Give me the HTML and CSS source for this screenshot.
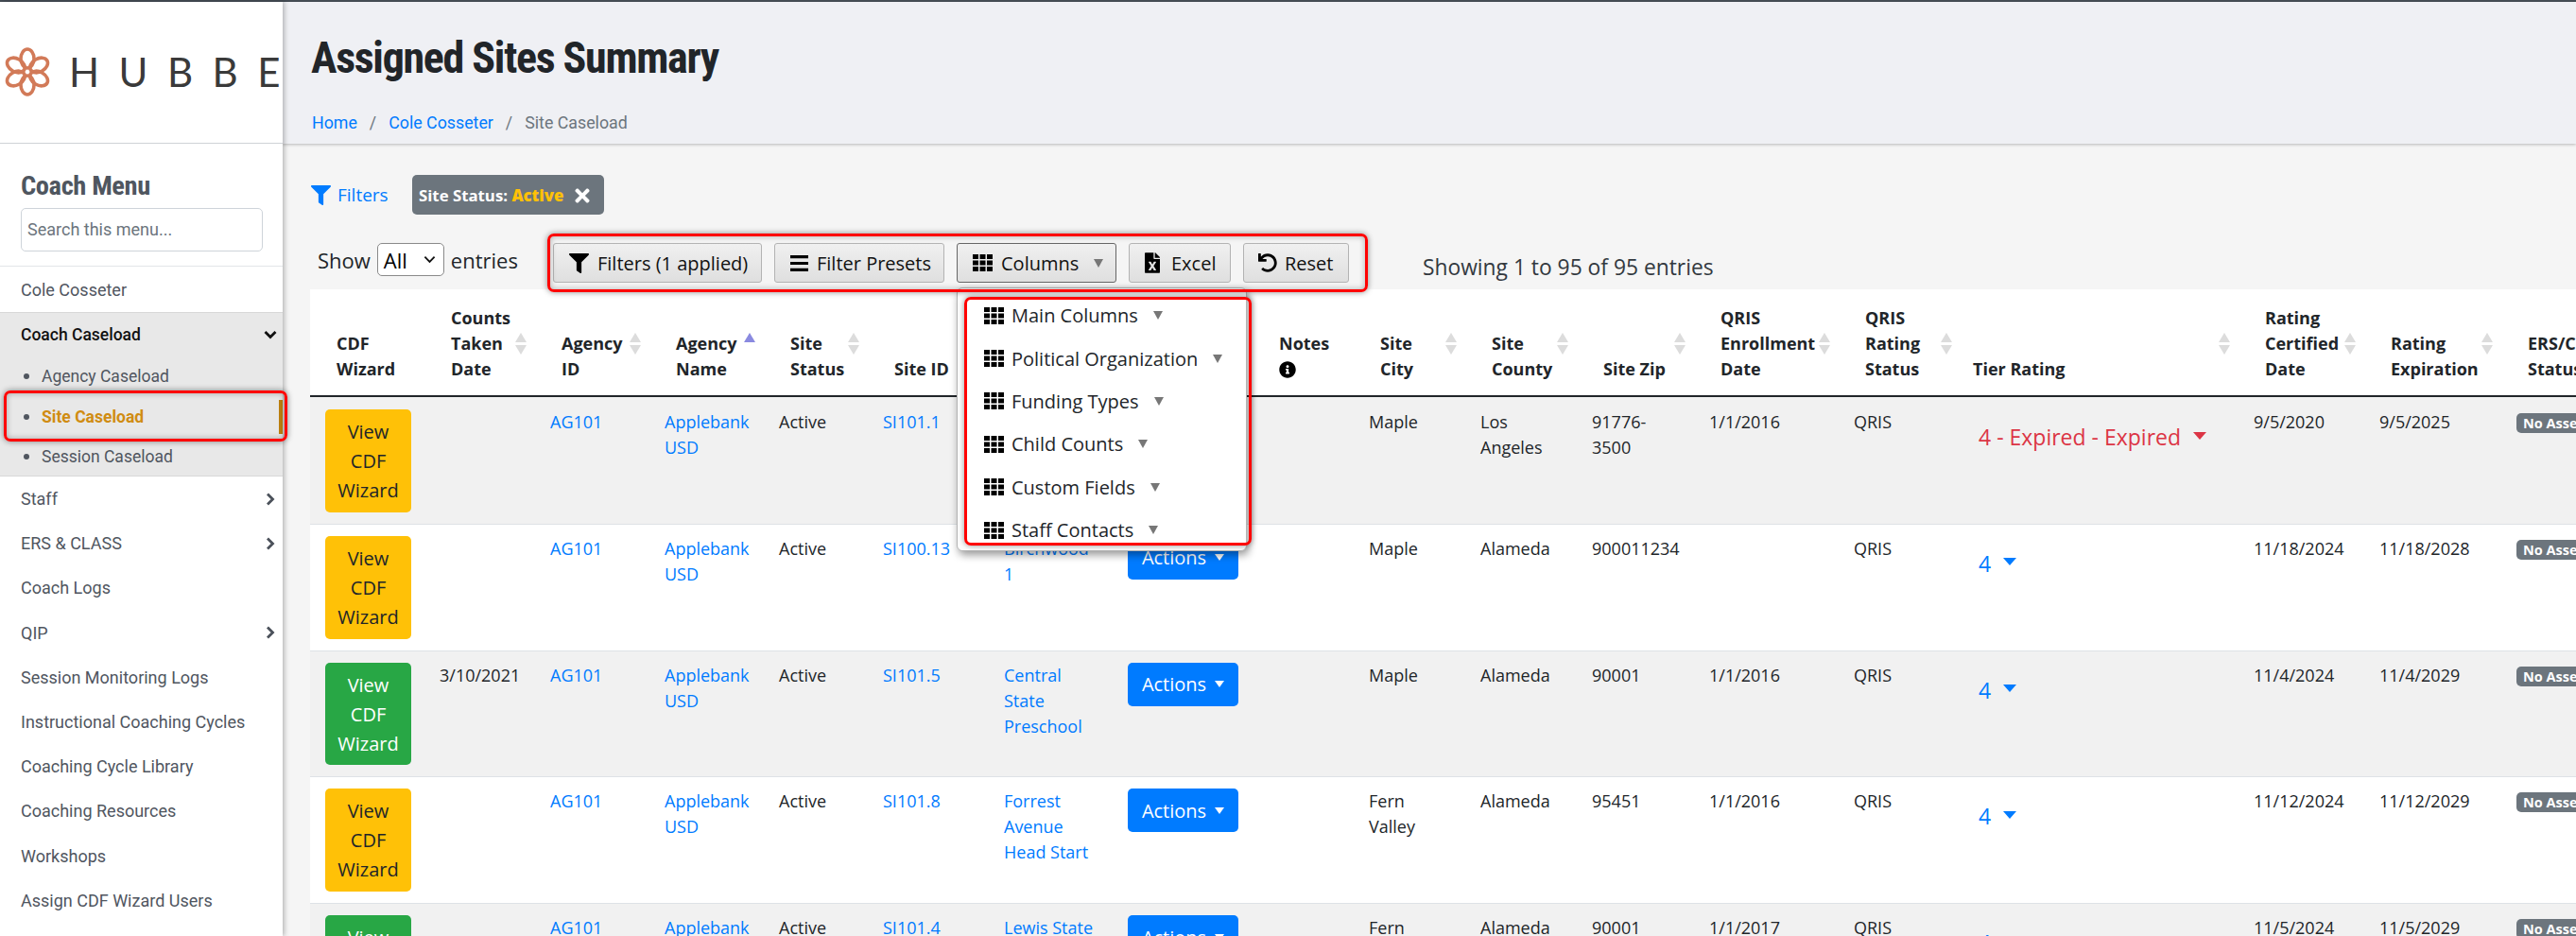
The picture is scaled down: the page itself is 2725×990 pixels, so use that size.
FILE: index.html
```html
<!DOCTYPE html>
<html lang="en">
<head>
<meta charset="utf-8">
<title>Assigned Sites Summary</title>
<link rel="stylesheet" href="styles.css">
</head>
<body>
<svg class="defs" width="0" height="0" aria-hidden="true">
  <symbol id="i-th" viewBox="0 0 21 18"><path d="M0 0h6v5H0zM7.5 0h6v5h-6zM15 0h6v5h-6zM0 6.5h6v5H0zM7.5 6.5h6v5h-6zM15 6.5h6v5h-6zM0 13h6v5H0zM7.5 13h6v5h-6zM15 13h6v5h-6z"/></symbol>
  <symbol id="i-filter" viewBox="0 0 512 512"><path d="M487.976 0H24.028C2.71 0-8.047 25.866 7.058 40.971L192 225.941V432c0 7.831 3.821 15.17 10.237 19.662l80 55.98C298.02 518.69 320 507.493 320 487.98V225.941l184.947-184.97C520.021 25.896 509.338 0 487.976 0z"/></symbol>
</svg>
<div class="topline"></div>
<div class="app">
  <aside class="sidebar">
    <div class="logo">
      <svg class="flower" viewBox="0 0 48 52" width="48" height="52">
        <g fill="none" stroke="#d27a58" stroke-width="3.6">
          <ellipse cx="24" cy="12" rx="7" ry="10"/>
          <ellipse cx="24" cy="12" rx="7" ry="10" transform="rotate(60 24 26)"/>
          <ellipse cx="24" cy="12" rx="7" ry="10" transform="rotate(120 24 26)"/>
          <ellipse cx="24" cy="12" rx="7" ry="10" transform="rotate(180 24 26)"/>
          <ellipse cx="24" cy="12" rx="7" ry="10" transform="rotate(240 24 26)"/>
          <ellipse cx="24" cy="12" rx="7" ry="10" transform="rotate(300 24 26)"/>
        </g>
      </svg>
      <span class="wordmark">HUBBE</span>
    </div>
    <div class="menu-head">
      <h2 class="menu-title">Coach Menu</h2>
      <div class="menu-search">Search this menu...</div>
    </div>
    <nav class="nav">
      <a class="nav-item first">Cole Cosseter</a>
      <div class="nav-group">
        <a class="nav-item open">Coach Caseload
          <svg class="chev" viewBox="0 0 14 10" width="14" height="10"><path d="M1.5 2 7 7.5 12.500 2" fill="none" stroke="#111" stroke-width="2.800"/></svg>
        </a>
        <a class="sub-item">Agency Caseload</a>
        <a class="sub-item active">Site Caseload</a>
        <a class="sub-item">Session Caseload</a>
      </div>
      <a class="nav-item">Staff <svg class="chev" viewBox="0 0 10 14" width="10" height="14"><path d="M2 1.500 7.500 7 2 12.500" fill="none" stroke="#4b515a" stroke-width="2.800"/></svg></a>
      <a class="nav-item">ERS &amp; CLASS <svg class="chev" viewBox="0 0 10 14" width="10" height="14"><path d="M2 1.500 7.500 7 2 12.500" fill="none" stroke="#4b515a" stroke-width="2.800"/></svg></a>
      <a class="nav-item">Coach Logs</a>
      <a class="nav-item">QIP <svg class="chev" viewBox="0 0 10 14" width="10" height="14"><path d="M2 1.500 7.500 7 2 12.500" fill="none" stroke="#4b515a" stroke-width="2.800"/></svg></a>
      <a class="nav-item">Session Monitoring Logs</a>
      <a class="nav-item">Instructional Coaching Cycles</a>
      <a class="nav-item">Coaching Cycle Library</a>
      <a class="nav-item">Coaching Resources</a>
      <a class="nav-item">Workshops</a>
      <a class="nav-item">Assign CDF Wizard Users</a>
    </nav>
    <div class="mark mark-nav"></div>
  </aside>
  <main class="main">
    <header class="page-head">
      <h1 class="page-title">Assigned Sites Summary</h1>
      <ol class="crumbs">
        <li><a>Home</a></li><li class="sep">/</li>
        <li><a>Cole Cosseter</a></li><li class="sep">/</li>
        <li class="here">Site Caseload</li>
      </ol>
    </header>
    <section class="content">
      <div class="filter-line">
        <a class="filter-link"><svg class="ico-filter" width="21" height="21"><use href="#i-filter"/></svg>Filters</a>
        <span class="chip">Site Status: <b>Active</b>
          <svg class="chip-x" viewBox="0 0 352 512" width="16" height="22"><path d="M242.72 256l100.07-100.07c12.28-12.28 12.28-32.19 0-44.48l-22.24-22.24c-12.28-12.28-32.19-12.28-44.48 0L176 189.28 75.93 89.21c-12.28-12.28-32.19-12.28-44.48 0L9.21 111.45c-12.28 12.28-12.28 32.19 0 44.48L109.28 256 9.21 356.07c-12.28 12.28-12.28 32.19 0 44.48l22.24 22.24c12.28 12.28 32.2 12.28 44.48 0L176 322.72l100.07 100.07c12.28 12.28 32.2 12.28 44.48 0l22.24-22.24c12.28-12.28 12.28-32.19 0-44.48L242.72 256z"/></svg>
        </span>
      </div>
      <div class="tools">
        <div class="length">Show <span class="select">All<svg viewBox="0 0 14 9" width="13" height="9"><path d="M1.500 1.500 7 7l5.500-5.500" fill="none" stroke="#111" stroke-width="2"/></svg></span> entries</div>
        <div class="buttons">
          <button class="dt"><svg width="21" height="21"><use href="#i-filter"/></svg>Filters (1 applied)</button>
          <button class="dt"><svg viewBox="0 0 19 17" width="19" height="17"><path d="M0 0h19v3.200H0zM0 6.900h19v3.200H0zM0 13.800h19V17H0z"/></svg>Filter Presets</button>
          <button class="dt on"><svg width="21" height="18"><use href="#i-th"/></svg>Columns<i class="tri"></i></button>
          <button class="dt"><svg viewBox="0 0 384 512" width="16" height="22"><path d="M224 136V0H24C10.700 0 0 10.700 0 24v464c0 13.300 10.700 24 24 24h336c13.300 0 24-10.700 24-24V160H248c-13.200 0-24-10.800-24-24zm60.100 106.500L224 336l60.100 93.500c5.100 8-.6 18.500-10.100 18.500h-34.900c-4.400 0-8.500-2.400-10.600-6.300C208.900 405.500 192 373 192 373c-6.400 14.800-10 20-36.600 68.800-2.100 3.900-6.100 6.300-10.500 6.300H110c-9.500 0-15.200-10.500-10.100-18.500l60.300-93.500-60.300-93.500c-5.200-8 .6-18.500 10.100-18.500h34.800c4.400 0 8.500 2.400 10.600 6.300 26.100 48.800 20 33.600 36.600 68.500 0 0 6.100-11.700 36.600-68.500 2.100-3.900 6.200-6.300 10.600-6.300H274c9.500-.1 15.200 10.400 10.100 18.400zM384 121.900v6.100H256V0h6.100c6.400 0 12.500 2.500 17 7l97.900 98c4.500 4.500 7 10.600 7 16.900z"/></svg>Excel</button>
          <button class="dt"><svg viewBox="0 0 512 512" width="20" height="20"><path d="M212.333 224.333H12c-6.627 0-12-5.373-12-12V12C0 5.373 5.373 0 12 0h48c6.627 0 12 5.373 12 12v78.112C117.773 39.279 184.260 7.470 258.175 8.007c136.906.994 246.448 111.623 246.157 248.532C504.041 393.258 393.120 504 256.333 504c-64.089 0-122.496-24.313-166.510-64.215-5.099-4.622-5.334-12.554-.467-17.420l33.967-33.967c4.474-4.474 11.662-4.717 16.401-.525C170.760 415.336 211.580 432 256.333 432c97.268 0 176-78.716 176-176 0-97.267-78.716-176-176-176-58.496 0-110.280 28.476-142.274 72.333h98.274c6.627 0 12 5.373 12 12v48c0 6.627-5.373 12-12 12z"/></svg>Reset</button>
        </div>
        <div class="info">Showing 1 to 95 of 95 entries</div>
        <div class="mark mark-tools"></div>
        <div class="dropdown">
          <div class="dd-item"><svg width="21" height="18"><use href="#i-th"/></svg>Main Columns<i class="tri"></i></div>
          <div class="dd-item"><svg width="21" height="18"><use href="#i-th"/></svg>Political Organization<i class="tri"></i></div>
          <div class="dd-item"><svg width="21" height="18"><use href="#i-th"/></svg>Funding Types<i class="tri"></i></div>
          <div class="dd-item"><svg width="21" height="18"><use href="#i-th"/></svg>Child Counts<i class="tri"></i></div>
          <div class="dd-item"><svg width="21" height="18"><use href="#i-th"/></svg>Custom Fields<i class="tri"></i></div>
          <div class="dd-item"><svg width="21" height="18"><use href="#i-th"/></svg>Staff Contacts<i class="tri"></i></div>
        </div>
        <div class="mark mark-dd"></div>
      </div>
      <table class="grid">
        <colgroup>
          <col class="c121"><col class="c117"><col class="c121"><col class="c121"><col class="c110"><col class="c128"><col class="c131"><col class="c148"><col class="c107"><col class="c118"><col class="c118"><col class="c124"><col class="c153"><col class="c129"><col class="c294"><col class="c133"><col class="c145"><col class="c200">
        </colgroup>
        <thead>
          <tr>
            <th>CDF<br>Wizard</th>
            <th class="s">Counts<br>Taken<br>Date</th>
            <th class="s">Agency<br>ID</th>
            <th class="s asc">Agency<br>Name</th>
            <th class="s">Site<br>Status</th>
            <th>Site ID</th>
            <th>Site<br>Name</th>
            <th>Actions</th>
            <th class="notes">Notes<br><svg viewBox="0 0 512 512" width="18" height="18"><path d="M256 8C119.043 8 8 119.083 8 256c0 136.997 111.043 248 248 248s248-111.003 248-248C504 119.083 392.957 8 256 8zm0 110c23.196 0 42 18.804 42 42s-18.804 42-42 42-42-18.804-42-42 18.804-42 42-42zm56 254c0 6.627-5.373 12-12 12h-88c-6.627 0-12-5.373-12-12v-24c0-6.627 5.373-12 12-12h12v-64h-12c-6.627 0-12-5.373-12-12v-24c0-6.627 5.373-12 12-12h64c6.627 0 12 5.373 12 12v100h12c6.627 0 12 5.373 12 12v24z"/></svg></th>
            <th class="s">Site<br>City</th>
            <th class="s">Site<br>County</th>
            <th class="s">Site Zip</th>
            <th class="s">QRIS<br>Enrollment<br>Date</th>
            <th class="s">QRIS<br>Rating<br>Status</th>
            <th class="s tier-h">Tier Rating</th>
            <th class="s">Rating<br>Certified<br>Date</th>
            <th class="s">Rating<br>Expiration</th>
            <th>ERS/CLASS<br>Status</th>
          </tr>
        </thead>
        <tbody>
          <tr>
            <td><a class="wiz warn">View CDF Wizard</a></td><td></td><td><a>AG101</a></td><td><a>Applebank USD</a></td><td>Active</td><td><a>SI101.1</a></td><td><a>Alder Creek Preschool</a></td><td><a class="act">Actions<i class="tri white"></i></a></td><td></td><td>Maple</td><td>Los Angeles</td><td>91776-3500</td><td>1/1/2016</td><td>QRIS</td>
            <td><a class="tier red">4 - Expired - Expired<i class="tri big"></i></a></td><td>9/5/2020</td><td>9/5/2025</td><td><span class="pill">No Assessments</span></td>
          </tr>
          <tr>
            <td><a class="wiz warn">View CDF Wizard</a></td><td></td><td><a>AG101</a></td><td><a>Applebank USD</a></td><td>Active</td><td><a>SI100.13</a></td><td><a>Birchwood 1</a></td><td><a class="act">Actions<i class="tri white"></i></a></td><td></td><td>Maple</td><td>Alameda</td><td>900011234</td><td></td><td>QRIS</td>
            <td><a class="tier">4<i class="tri big"></i></a></td><td>11/18/2024</td><td>11/18/2028</td><td><span class="pill">No Assessments</span></td>
          </tr>
          <tr>
            <td><a class="wiz ok">View CDF Wizard</a></td><td>3/10/2021</td><td><a>AG101</a></td><td><a>Applebank USD</a></td><td>Active</td><td><a>SI101.5</a></td><td><a>Central State Preschool</a></td><td><a class="act">Actions<i class="tri white"></i></a></td><td></td><td>Maple</td><td>Alameda</td><td>90001</td><td>1/1/2016</td><td>QRIS</td>
            <td><a class="tier">4<i class="tri big"></i></a></td><td>11/4/2024</td><td>11/4/2029</td><td><span class="pill">No Assessments</span></td>
          </tr>
          <tr>
            <td><a class="wiz warn">View CDF Wizard</a></td><td></td><td><a>AG101</a></td><td><a>Applebank USD</a></td><td>Active</td><td><a>SI101.8</a></td><td><a>Forrest Avenue Head Start</a></td><td><a class="act">Actions<i class="tri white"></i></a></td><td></td><td>Fern Valley</td><td>Alameda</td><td>95451</td><td>1/1/2016</td><td>QRIS</td>
            <td><a class="tier">4<i class="tri big"></i></a></td><td>11/12/2024</td><td>11/12/2029</td><td><span class="pill">No Assessments</span></td>
          </tr>
          <tr>
            <td><a class="wiz ok">View CDF Wizard</a></td><td></td><td><a>AG101</a></td><td><a>Applebank USD</a></td><td>Active</td><td><a>SI101.4</a></td><td><a>Lewis State Preschool</a></td><td><a class="act">Actions<i class="tri white"></i></a></td><td></td><td>Fern Valley</td><td>Alameda</td><td>90001</td><td>1/1/2017</td><td>QRIS</td>
            <td><a class="tier">4<i class="tri big"></i></a></td><td>11/5/2024</td><td>11/5/2029</td><td><span class="pill">No Assessments</span></td>
          </tr>
        </tbody>
      </table>
    </section>
  </main>
</div>
</body>
</html>
```
FILE: styles.css
```css
* { box-sizing: border-box; }
html, body { margin: 0; height: 990px; overflow: hidden; }
body { background: #f5f5f5; font-family: "Open Sans", sans-serif; color: #212529; }
.defs { position: absolute; }
.topline { height: 2px; background: #454d55; }
.app { display: flex; height: 988px; }

/* Sidebar */
.sidebar { position: relative; z-index: 2; flex: 0 0 299px; width: 299px; min-width: 0; background: #fff; box-shadow: 2px 0 5px rgba(0,0,0,.25); font-family: Roboto, sans-serif; }
.logo { height: 150px; border-bottom: 1px solid #cfd2d6; display: flex; align-items: center; padding-left: 5px; gap: 20px; }
.flower { flex: none; margin-top: -1px; }
.wordmark { flex: none; width: 222px; font-family: Lato, sans-serif; font-size: 42px; color: #3a3a3a; letter-spacing: 20.500px; line-height: 1; white-space: nowrap; margin-top: -2px; }
.menu-head { height: 129px; padding: 27px 21px 0 22px; }
.menu-title { margin: 0 0 5px; font-size: 28.500px; line-height: 36px; font-weight: 700; color: #4f565f; font-stretch: 75%; letter-spacing: -.4px; }
.menu-search { height: 46px; border: 1px solid #ced4da; border-radius: 5px; padding: 0 6px; line-height: 44px; font-size: 18px; color: #6c757d; }
.nav { border-top: 1px solid #e3e5e8; display: flex; flex-direction: column; }
.nav-item { display: flex; align-items: center; justify-content: space-between; height: 47.2px; padding: 0 8px 0 22px; font-size: 18px; color: #50565f; }
.nav-item.first { height: 48px; }
.nav-group { background: #e8e8e8; border-top: 1px solid #d8d8d8; border-bottom: 1px solid #d8d8d8; height: 174px; }
.nav-item.open { color: #111; font-weight: 500; font-size: 17.500px; height: 46px; padding-right: 6px; }
.chev { flex: none; }
.sub-item { display: flex; align-items: center; height: 42.500px; padding-left: 44px; font-size: 17.500px; color: #50565f; position: relative; }
.sub-item::before { content: ""; position: absolute; left: 25px; top: 18px; width: 6px; height: 6px; border-radius: 50%; background: #50565f; }
.sub-item.active { color: #d08c12; font-weight: 700; }
.sub-item.active::after { content: ""; position: absolute; right: 0; top: 3px; bottom: 3px; width: 4px; background: #bd7f0e; }

/* Red annotation frames */
.mark { position: absolute; border: 3px solid #f00; border-radius: 7px; box-shadow: 0 0 6px rgba(0,0,0,.45), inset 0 0 6px rgba(0,0,0,.3); pointer-events: none; z-index: 5; }
.mark-nav { left: 4px; top: 411px; width: 300px; height: 54px; }
.mark-tools { left: 250px; top: 0; width: 868px; height: 62px; }
.mark-dd { left: 691px; top: 67px; width: 304px; height: 263px; box-shadow: 0 0 6px rgba(0,0,0,.45); }

/* Page header */
.main { flex: 1; min-width: 0; }
.page-head { height: 150px; background: #eff0f4; padding: 0 0 0 30px; box-shadow: 0 1px 3px rgba(0,0,0,.25); }
.page-title { margin: 0; padding-top: 27px; font-family: Roboto, sans-serif; font-size: 46px; line-height: 64px; font-weight: 700; font-stretch: 75%; color: #212529; letter-spacing: -1.300px; white-space: nowrap; }
.crumbs { list-style: none; display: flex; margin: 0; padding: 24px 0 0 1px; font-family: Roboto, sans-serif; font-size: 17.800px; line-height: 26px; color: #6c757d; }
.crumbs a { color: #007bff; }
.crumbs .sep { padding: 0 13px; }

/* Content */
.content { padding-left: 30px; }
.filter-line { display: flex; align-items: center; height: 42px; margin-top: 33px; }
.filter-link { display: flex; align-items: center; gap: 7px; width: 107px; color: #007bff; font-size: 19px; fill: #007bff; }
.ico-filter { flex: none; }
.chip { display: flex; align-items: center; height: 42px; width: 203px; padding: 0 7px; background: #6c757d; border-radius: 5px; color: #fff; font-size: 16.800px; font-weight: 700; white-space: pre; fill: #fff; }
.chip b { color: #ffc107; }
.chip-x { margin-left: 12px; margin-top: 2px; }

.tools { position: relative; height: 59px; display: flex; margin-top: 20px; }
.length { display: flex; align-items: center; gap: 7px; height: 35px; margin-top: 10px; padding-left: 7px; width: 256px; font-size: 22px; color: #212529; flex: none; white-space: nowrap; }
.select { display: flex; align-items: center; justify-content: space-between; width: 71px; height: 35px; padding: 0 8px 0 6px; background: #fff; border: 1px solid #8a8a8a; border-radius: 5px; color: #000; }
.buttons { display: flex; gap: 13px; margin-top: 10px; height: 42px; flex: none; }
.dt { display: flex; align-items: center; height: 42px; padding: 0 0 0 16px; gap: 9px; border: 1px solid #b3b3b3; border-radius: 3px; background: linear-gradient(#f0f0f0, #dfdfdf); font-family: "Open Sans", sans-serif; font-size: 20px; color: #111; white-space: nowrap; }
.dt:nth-child(1) { width: 221px; }
.dt:nth-child(2) { width: 180px; }
.dt:nth-child(3) { width: 169px; border-color: #666; }
.dt:nth-child(4) { width: 108px; gap: 12px; }
.dt:nth-child(5) { width: 112px; padding-left: 15px; gap: 8px; }
.tri { display: inline-block; width: 0; height: 0; border-left: 5px solid transparent; border-right: 5px solid transparent; border-top: 9px solid #777; }
.dt .tri { margin-left: 7px; }
.info { margin-left: 78px; margin-top: 21px; font-size: 22.800px; line-height: 30px; color: #33393f; white-space: nowrap; }

.dropdown { position: absolute; z-index: 4; left: 683px; top: 57px; width: 307px; height: 279px; overflow: hidden; background: #fff; border: 1px solid #b5b5b5; border-radius: 6px; box-shadow: 2px 4px 8px rgba(0,0,0,.4); padding-top: 6px; }
.dd-item { display: flex; align-items: center; height: 45.400px; padding-left: 28px; font-size: 20px; color: #212529; white-space: nowrap; }
.dd-item svg { margin-right: 8px; flex: none; }
.dd-item .tri { margin-left: 16px; }

/* Table */
.grid { width: 2396px; table-layout: fixed; border-collapse: collapse; background: #fff; font-size: 18px; line-height: 27px; margin-left: -1px; }
.c107 { width: 107px; } .c110 { width: 110px; } .c117 { width: 117px; } .c118 { width: 118px; } .c121 { width: 121px; }
.c124 { width: 124px; } .c128 { width: 128px; } .c129 { width: 129px; } .c131 { width: 131px; } .c133 { width: 133px; }
.c145 { width: 145px; } .c148 { width: 148px; } .c153 { width: 153px; } .c200 { width: 200px; } .c294 { width: 294px; }
.grid th { position: relative; height: 113px; vertical-align: bottom; text-align: left; padding: 0 4px 14px 28px; font-weight: 700; border-bottom: 2px solid #212529; white-space: nowrap; }
.grid th.tier-h { padding-left: 13px; }
.grid th.s::before, .grid th.s::after { content: ""; position: absolute; right: 9px; width: 0; height: 0; border-left: 6px solid transparent; border-right: 6px solid transparent; }
.grid th.s::before { top: 46px; border-bottom: 10px solid #dcdcdc; }
.grid th.s::after { top: 59px; border-top: 10px solid #dcdcdc; }
.grid th.asc::before { border-bottom-color: #8a8ae0; }
.grid th.asc::after { border-top-color: transparent; }
.grid th.notes svg { vertical-align: -3px; }
.grid td { vertical-align: top; padding: 12px 15px 12px 16px; border-bottom: 1px solid #dee2e6; color: #212529; overflow: hidden; }
.grid tbody tr:nth-child(odd) { background: #f1f1f1; }
.grid tbody tr:first-child td { padding-top: 13px; }
.grid td a { color: #007bff; }
.grid td a.wiz { display: block; width: 91px; height: 108.800px; padding: 8px 12px; text-align: center; border-radius: 5px; font-size: 20px; line-height: 31px; }
.grid td a.warn { background: #ffc107; color: #212529; }
.grid td a.ok { background: #28a745; color: #fff; }
.grid td a.act { display: flex; align-items: center; justify-content: center; gap: 9px; height: 46px; background: #007bff; border-radius: 5px; color: #fff; font-size: 20px; margin-top: 0; width: 117px; }
.tri.white { border-top-color: #fff; border-left-width: 5.500px; border-right-width: 5.500px; border-top-width: 7px; }
.grid td a.tier { display: inline-flex; align-items: center; margin: 16px 0 0 3px; font-size: 23px; line-height: 27px; white-space: nowrap; }
.tier .tri.big { margin-left: 13px; border-left-width: 7px; border-right-width: 7px; border-top-width: 8px; border-top-color: #007bff; margin-top: -4px; }
.grid td a.red { color: #dc3545; }
.red .tri.big { border-top-color: #dc3545; }
.grid td .pill { display: inline-block; height: 21px; padding: 0 7px; margin-top: 4px; line-height: 21px; background: #6c757d; border-radius: 5px; color: #fff; font-size: 14.500px; font-weight: 700; white-space: nowrap; vertical-align: top; }
```
